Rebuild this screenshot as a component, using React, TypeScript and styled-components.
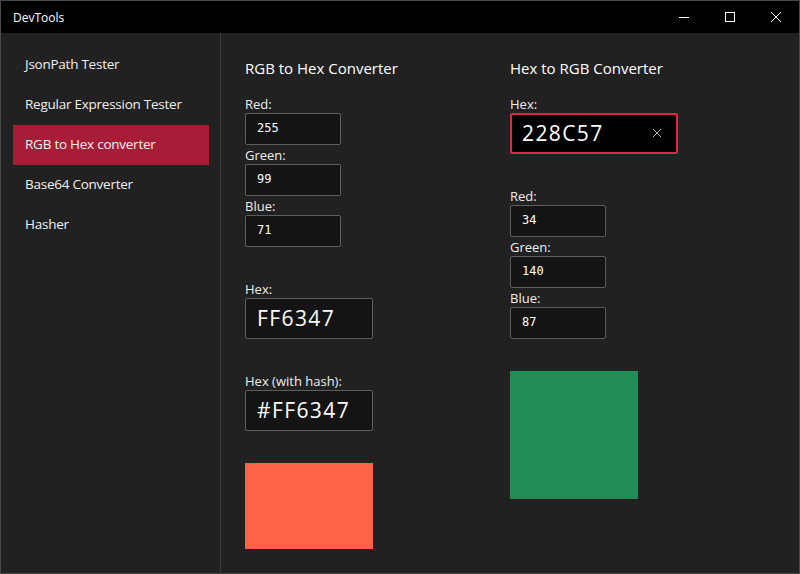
import React from "react";
import styled, { createGlobalStyle } from "styled-components";

const Global = createGlobalStyle`
  html, body { margin: 0; padding: 0; background: #000; }
  * { box-sizing: border-box; }
  body { font-family: "Open Sans", "Noto Sans", sans-serif; }
`;

const Window = styled.div`
  width: 800px;
  height: 574px;
  border: 1px solid #4b4b4b;
  display: flex;
  flex-direction: column;
  background: #212121;
  overflow: hidden;
`;

const TitleBar = styled.div`
  height: 32px;
  background: #000;
  display: flex;
  align-items: center;
  flex-shrink: 0;
`;

const Title = styled.div`
  flex: 1;
  padding-left: 12px;
  font-size: 12px;
  color: #fff;
`;

const CaptionButton = styled.div`
  width: 46px;
  height: 32px;
  display: flex;
  align-items: center;
  justify-content: center;
  color: #fff;
`;

const Body = styled.div`
  flex: 1;
  display: flex;
  min-height: 0;
`;

const Sidebar = styled.nav`
  width: 220px;
  border-right: 1px solid #3b3b3b;
  padding: 12px 11px 0 12px;
  display: flex;
  flex-direction: column;
`;

const NavItem = styled.div<{ $active?: boolean }>`
  height: 40px;
  display: flex;
  align-items: center;
  padding: 0 0 2px 12px;
  font-size: 13.5px;
  letter-spacing: -0.25px;
  color: #f0f0f0;
  background: ${(p) => (p.$active ? "#a71d38" : "transparent")};
`;

const Main = styled.main`
  flex: 1;
  display: flex;
  padding: 25px 0 0 24px;
  gap: 137px;
`;

const Column = styled.section`
  width: 128px;
  display: flex;
  flex-direction: column;
  align-items: flex-start;
`;

const Heading = styled.h2`
  margin: 0 0 18px 0;
  font-size: 15px;
  line-height: 20px;
  font-weight: 400;
  color: #fff;
  white-space: nowrap;
`;

const Label = styled.label<{ $gap?: number }>`
  display: block;
  margin-top: ${(p) => p.$gap ?? 0}px;
  font-size: 13px;
  line-height: 17px;
  color: #eee;
  white-space: nowrap;
`;

const SmallBox = styled.div`
  width: 96px;
  height: 32px;
  border: 1px solid #5e5e5e;
  border-radius: 2px;
  background: #141414;
  display: flex;
  align-items: center;
  padding: 0 0 2px 11px;
  font-family: "DejaVu Sans Mono", "Liberation Mono", monospace;
  font-size: 12px;
  color: #fff;
`;

const LargeBox = styled.div<{ $focused?: boolean; $w?: number }>`
  width: ${(p) => p.$w ?? 128}px;
  height: 41px;
  border: ${(p) => (p.$focused ? "2px solid #e8214a" : "1px solid #5e5e5e")};
  border-radius: 2px;
  background: ${(p) => (p.$focused ? "#000" : "#141414")};
  display: flex;
  align-items: center;
  justify-content: space-between;
  padding: 0 14px 2px ${(p) => (p.$focused ? 10 : 11)}px;
  font-size: 21px;
  letter-spacing: 1.4px;
  color: #fff;
`;

const Swatch = styled.div<{ $color: string; $h: number; $gap: number }>`
  width: 128px;
  height: ${(p) => p.$h}px;
  margin-top: ${(p) => p.$gap}px;
  background: ${(p) => p.$color};
`;

const ClearIcon = () => (
  <svg width="10" height="10" viewBox="0 0 10 10">
    <path d="M1 1L9 9M9 1L1 9" stroke="#b0b0b0" strokeWidth="1" />
  </svg>
);

export default function App() {
  return (
    <>
      <Global />
      <Window>
        <TitleBar>
          <Title>DevTools</Title>
          <CaptionButton>
            <svg width="10" height="10" viewBox="0 0 10 10">
              <path d="M0 5.5H10" stroke="#fff" strokeWidth="1" />
            </svg>
          </CaptionButton>
          <CaptionButton>
            <svg width="10" height="10" viewBox="0 0 10 10">
              <rect x="0.5" y="0.5" width="9" height="9" fill="none" stroke="#fff" strokeWidth="1" />
            </svg>
          </CaptionButton>
          <CaptionButton>
            <svg width="10" height="10" viewBox="0 0 10 10">
              <path d="M0 0L10 10M10 0L0 10" stroke="#fff" strokeWidth="1" />
            </svg>
          </CaptionButton>
        </TitleBar>
        <Body>
          <Sidebar>
            <NavItem>JsonPath Tester</NavItem>
            <NavItem>Regular Expression Tester</NavItem>
            <NavItem $active>RGB to Hex converter</NavItem>
            <NavItem>Base64 Converter</NavItem>
            <NavItem>Hasher</NavItem>
          </Sidebar>
          <Main>
            <Column>
              <Heading>RGB to Hex Converter</Heading>
              <Label>Red:</Label>
              <SmallBox>255</SmallBox>
              <Label $gap={2}>Green:</Label>
              <SmallBox>99</SmallBox>
              <Label $gap={2}>Blue:</Label>
              <SmallBox>71</SmallBox>
              <Label $gap={34}>Hex:</Label>
              <LargeBox>FF6347</LargeBox>
              <Label $gap={34}>Hex (with hash):</Label>
              <LargeBox>#FF6347</LargeBox>
              <Swatch $color="#FF6347" $h={86} $gap={32} />
            </Column>
            <Column>
              <Heading>Hex to RGB Converter</Heading>
              <Label>Hex:</Label>
              <LargeBox $focused $w={168}>
                <span>228C57</span>
                <ClearIcon />
              </LargeBox>
              <Label $gap={34}>Red:</Label>
              <SmallBox>34</SmallBox>
              <Label $gap={2}>Green:</Label>
              <SmallBox>140</SmallBox>
              <Label $gap={2}>Blue:</Label>
              <SmallBox>87</SmallBox>
              <Swatch $color="#228C57" $h={128} $gap={32} />
            </Column>
          </Main>
        </Body>
      </Window>
    </>
  );
}
